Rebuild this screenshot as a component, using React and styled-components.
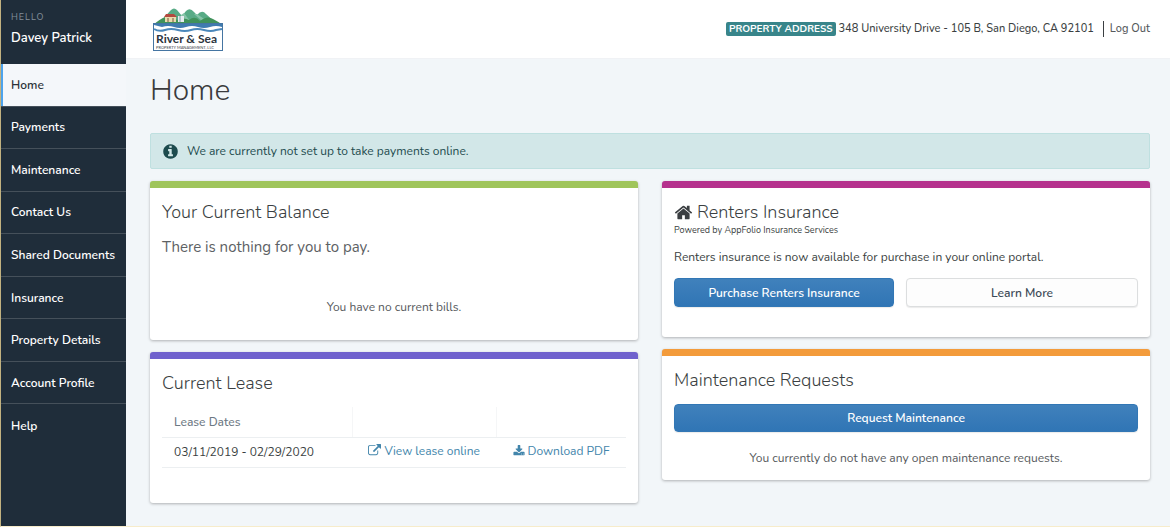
import React from 'react';
import styled, { createGlobalStyle } from 'styled-components';

const GlobalStyle = createGlobalStyle`
    *, *::before, *::after {
        box-sizing: border-box;
    }
    body {
        margin: 0;
        background-color: #f2f6f9;
        color: #3b3f42;
        font-family: Nunito, Lato, "Liberation Sans", sans-serif;
        font-size: 12px;
        line-height: 16px;
    }
    h1, h2, p, ul {
        margin: 0;
        padding: 0;
    }
    a {
        text-decoration: none;
    }
`;

const Page = styled.div`
    display: flex;
    min-height: 100vh;
    border-left: 1px solid #c2b280;
    border-bottom: 1px solid #f7eccb;
`;

const Sidebar = styled.aside`
    flex: 0 0 125px;
    background-color: #1f2d3a;
    color: #fff;
`;

const User = styled.div`
    height: 64px;
    padding: 9px 10px;
`;

const Hello = styled.div`
    font-size: 9px;
    letter-spacing: 1px;
    color: #84909a;
`;

const UserName = styled.div`
    padding-top: 3px;
    font-size: 13px;
    line-height: 20px;
    font-weight: 600;
`;

const NavList = styled.ul`
    display: grid;
    grid-auto-rows: 1fr;
    height: 383px;
    list-style: none;
`;

const NavItem = styled.li`
    display: flex;
    border-bottom: 1px solid #45505a;

    &:last-child {
        border-bottom: none;
    }
`;

const NavLink = styled.a`
    display: flex;
    flex: 1;
    align-items: center;
    padding-left: ${props => (props.$active ? '8px' : '10px')};
    border-left: ${props => (props.$active ? '2px solid #4da3ec' : 'none')};
    background-color: ${props => (props.$active ? '#f4f7fa' : 'transparent')};
    color: ${props => (props.$active ? '#2b3238' : '#fff')};
    font-weight: 600;
    white-space: nowrap;
`;

const Content = styled.div`
    flex: 1;
    min-width: 0;
`;

const Header = styled.header`
    display: flex;
    align-items: center;
    justify-content: space-between;
    height: 59px;
    padding: 0 20px 0 27px;
    background-color: #fff;
    border-bottom: 1px solid #f0f2f5;
`;

const Account = styled.div`
    display: flex;
    align-items: center;
    gap: 3px;
    font-size: 11px;
    font-weight: 500;
`;

const Badge = styled.span`
    padding: 0 3px;
    border-radius: 2px;
    background-color: #38858a;
    color: #fff;
    font-size: 10px;
    line-height: 14px;
    font-weight: 700;
`;

const LogOut = styled.a`
    margin-left: 6px;
    padding-left: 6px;
    border-left: 1px solid #3b3f42;
    color: #55595c;
`;

const Main = styled.main`
    padding: 12px 20px 23px 24px;
`;

const PageTitle = styled.h1`
    font-size: 30px;
    line-height: 40px;
    font-weight: 300;
    color: #3b3b3d;
`;

const Alert = styled.div`
    display: flex;
    align-items: center;
    gap: 8px;
    height: 36px;
    margin: 22px 0 12px;
    padding: 0 11px;
    border: 1px solid #bfe0e0;
    border-radius: 2px;
    background-color: #d2e7e8;
    color: #1d4b4e;
`;

const Columns = styled.div`
    display: grid;
    grid-template-columns: 1fr 1fr;
    gap: 24px;
`;

const Column = styled.div`
    display: flex;
    flex-direction: column;
    gap: 12px;
`;

const Card = styled.section`
    padding: 12px 12px ${props => props.$bottom};
    border-top: 7px solid ${props => props.$color};
    border-radius: 3px;
    background-color: #fff;
    box-shadow: 0 1px 3px rgba(0, 0, 0, 0.28);
`;

const CardTitle = styled.h2`
    display: flex;
    align-items: center;
    gap: 4px;
    font-size: 18px;
    line-height: 24px;
    font-weight: 300;
`;

const Lead = styled.p`
    padding-top: 13px;
    font-size: 15px;
    line-height: 20px;
    color: #5d6164;
`;

const Note = styled.p`
    padding-top: ${props => props.$top};
    color: #56595c;
    text-align: center;
`;

const Powered = styled.p`
    font-size: 9px;
    line-height: 12px;
`;

const Description = styled.p`
    padding: 13px 0;
`;

const ButtonRow = styled.div`
    display: grid;
    grid-template-columns: 220fr 232fr;
    gap: 12px;
`;

const Button = styled.button`
    display: block;
    width: 100%;
    height: 29px;
    padding: 0 12px;
    border: 1px solid ${props => (props.$primary ? '#3277b5' : '#dcdedf')};
    border-radius: 4px;
    background: ${props => (props.$primary ? 'linear-gradient(#4081bc, #3075b5)' : '#fdfdfd')};
    box-shadow: 0 1px 1px rgba(0, 0, 0, 0.08);
    color: ${props => (props.$primary ? '#fff' : '#3c4a57')};
    font: inherit;
    font-weight: 600;
    cursor: pointer;
`;

const RequestButton = styled(Button)`
    height: 28px;
    margin-top: 12px;
`;

const LeaseTable = styled.table`
    width: 100%;
    margin-top: 12px;
    border-collapse: collapse;
    table-layout: fixed;

    th, td {
        height: 30px;
        padding: 0 12px;
        border-bottom: 1px solid #eceff1;
        font-weight: 400;
        text-align: center;
        white-space: nowrap;
    }
    th + th {
        border-left: 1px solid #f5f6f7;
    }
    th:first-child, td:first-child {
        width: 41%;
        text-align: left;
    }
    th:last-child, td:last-child {
        width: 28%;
    }
    th {
        color: #6c7883;
        font-weight: 500;
    }
`;

const LeaseLink = styled.a`
    display: inline-flex;
    align-items: center;
    gap: 3px;
    color: #4285ab;
`;

const icons = {
    info: 'M1152 1376v-160q0-14-9-23t-23-9h-96v-512q0-14-9-23t-23-9h-320q-14 0-23 9t-9 23v160q0 14 9 23t23 9h96v320h-96q-14 0-23 9t-9 23v160q0 14 9 23t23 9h448q14 0 23-9t9-23zm-128-896v-160q0-14-9-23t-23-9h-192q-14 0-23 9t-9 23v160q0 14 9 23t23 9h192q14 0 23-9t9-23zm640 416q0 209-103 385.5t-279.5 279.5-385.5 103-385.5-103-279.5-279.5-103-385.5 103-385.5 279.5-279.5 385.5-103 385.5 103 279.5 279.5 103 385.5z',
    home: 'M1472 992v480q0 26-19 45t-45 19h-384v-384h-256v384h-384q-26 0-45-19t-19-45v-480q0-1 .5-3t.5-3l575-474 575 474q1 2 1 6zm223-69l-62 74q-8 9-21 11h-3q-13 0-21-7l-692-577-692 577q-12 8-24 7-13-2-21-11l-62-74q-8-10-7-23.5t11-21.5l719-599q32-26 76-26t76 26l244 204v-195q0-14 9-23t23-9h192q14 0 23 9t9 23v408l219 182q10 8 11 21.5t-7 23.5z',
    external: 'M1408 928v320q0 119-84.5 203.5t-203.5 84.5h-832q-119 0-203.5-84.5t-84.5-203.5v-832q0-119 84.5-203.5t203.5-84.5h704q14 0 23 9t9 23v64q0 14-9 23t-23 9h-704q-66 0-113 47t-47 113v832q0 66 47 113t113 47h832q66 0 113-47t47-113v-320q0-14 9-23t23-9h64q14 0 23 9t9 23zm384-864v512q0 26-19 45t-45 19-45-19l-176-176-652 652q-10 10-23 10t-23-10l-114-114q-10-10-10-23t10-23l652-652-176-176q-19-19-19-45t19-45 45-19h512q26 0 45 19t19 45z',
    download: 'M1344 1344q0-26-19-45t-45-19-45 19-19 45 19 45 45 19 45-19 19-45zm256 0q0-26-19-45t-45-19-45 19-19 45 19 45 45 19 45-19 19-45zm128-224v320q0 40-28 68t-68 28h-1472q-40 0-68-28t-28-68v-320q0-40 28-68t68-28h465l135 136q58 56 136 56t136-56l136-136h464q40 0 68 28t28 68zm-325-569q17 41-14 70l-448 448q-18 19-45 19t-45-19l-448-448q-31-29-14-70 17-39 59-39h256v-448q0-26 19-45t45-19h256q26 0 45 19t19 45v448h256q42 0 59 39z',
};

const Icon = ({ name, size }) => (
    <svg width={size} height={size} viewBox="0 0 1792 1792" fill="currentColor" aria-hidden="true">
        <path d={icons[name]} />
    </svg>
);

const Logo = () => (
    <svg width="70" height="43" viewBox="0 0 70 43" role="img" aria-label="River & Sea Property Management">
        <path d="M8 14Q14 6 18 2Q21-1 24 2L29 8L33 3Q37-1 41 4L44 7Q49 1 53 6L63 15H10Z" fill="#58ab86" />
        <path d="M28 7L33 13H37L31 5ZM41 6L49 13H54L44 6Z" fill="#86c4a8" />
        <path d="M0 17Q7 11 12 9Q19 8 24 12Q31 9 36 12Q42 7 47 13Q54 7 60 11Q64 13 70 17Z" fill="#40925b" />
        <path d="M12 8H23V14H12Z" fill="#e9dcae" />
        <path d="M11 9L13 6H21L24 9Z" fill="#b34a3f" />
        <path d="M15 10V14M20 10V14" stroke="#77583c" />
        <path d="M25 8H31V14H25Z" fill="#e7edf0" />
        <path d="M27 8V14" stroke="#7f9baa" />
        <rect x="0.5" y="15.5" width="69" height="27" fill="#fff" stroke="#4575a2" />
        <path d="M1 16H69V19Q63 17 57 19T45 19T33 19T21 19T9 19L1 17Z" fill="#3f7bb0" />
        <path d="M1 21Q6 24 12 22T25 22T38 22T51 22T63 22L69 21" fill="none" stroke="#4b88bb" strokeWidth="2" />
        <text x="3" y="35" fontFamily="Lato" fontSize="12" fontWeight="700" fill="#2c3540">River &amp; Sea</text>
        <text x="3" y="41" fontFamily="Lato" fontSize="4" fill="#3c444c">PROPERTY MANAGEMENT, LLC</text>
    </svg>
);

const navItems = [
    'Home',
    'Payments',
    'Maintenance',
    'Contact Us',
    'Shared Documents',
    'Insurance',
    'Property Details',
    'Account Profile',
    'Help',
];

const App = () => {
    return (
        <>
            <GlobalStyle />
            <Page>
                <Sidebar>
                    <User>
                        <Hello>HELLO</Hello>
                        <UserName>Davey Patrick</UserName>
                    </User>
                    <nav>
                        <NavList>
                            {navItems.map((item) => (
                                <NavItem key={item}>
                                    <NavLink href="#" $active={item === 'Home'}>{item}</NavLink>
                                </NavItem>
                            ))}
                        </NavList>
                    </nav>
                </Sidebar>
                <Content>
                    <Header>
                        <Logo />
                        <Account>
                            <Badge>PROPERTY ADDRESS</Badge>
                            <span>348 University Drive - 105 B, San Diego, CA 92101</span>
                            <LogOut href="#">Log Out</LogOut>
                        </Account>
                    </Header>
                    <Main>
                        <PageTitle>Home</PageTitle>
                        <Alert role="status">
                            <Icon name="info" size={17} />
                            <span>We are currently not set up to take payments online.</span>
                        </Alert>
                        <Columns>
                            <Column>
                                <Card $color="#9fc55b" $bottom="25px">
                                    <CardTitle>Your Current Balance</CardTitle>
                                    <Lead>There is nothing for you to pay.</Lead>
                                    <Note $top="42px">You have no current bills.</Note>
                                </Card>
                                <Card $color="#6f61cd" $bottom="35px">
                                    <CardTitle>Current Lease</CardTitle>
                                    <LeaseTable>
                                        <thead>
                                            <tr>
                                                <th scope="col">Lease Dates</th>
                                                <th></th>
                                                <th></th>
                                            </tr>
                                        </thead>
                                        <tbody>
                                            <tr>
                                                <td>03/11/2019 - 02/29/2020</td>
                                                <td>
                                                    <LeaseLink href="#"><Icon name="external" size={13} />View lease online</LeaseLink>
                                                </td>
                                                <td>
                                                    <LeaseLink href="#"><Icon name="download" size={12} />Download PDF</LeaseLink>
                                                </td>
                                            </tr>
                                        </tbody>
                                    </LeaseTable>
                                </Card>
                            </Column>
                            <Column>
                                <Card $color="#b5318d" $bottom="30px">
                                    <CardTitle><Icon name="home" size={19} />Renters Insurance</CardTitle>
                                    <Powered>Powered by AppFolio Insurance Services</Powered>
                                    <Description>
                                        Renters insurance is now available for purchase in your online portal.
                                    </Description>
                                    <ButtonRow>
                                        <Button type="button" $primary>Purchase Renters Insurance</Button>
                                        <Button type="button">Learn More</Button>
                                    </ButtonRow>
                                </Card>
                                <Card $color="#f39b3b" $bottom="14px">
                                    <CardTitle>Maintenance Requests</CardTitle>
                                    <RequestButton type="button" $primary>Request Maintenance</RequestButton>
                                    <Note $top="18px">You currently do not have any open maintenance requests.</Note>
                                </Card>
                            </Column>
                        </Columns>
                    </Main>
                </Content>
            </Page>
        </>
    );
};

export default App;
